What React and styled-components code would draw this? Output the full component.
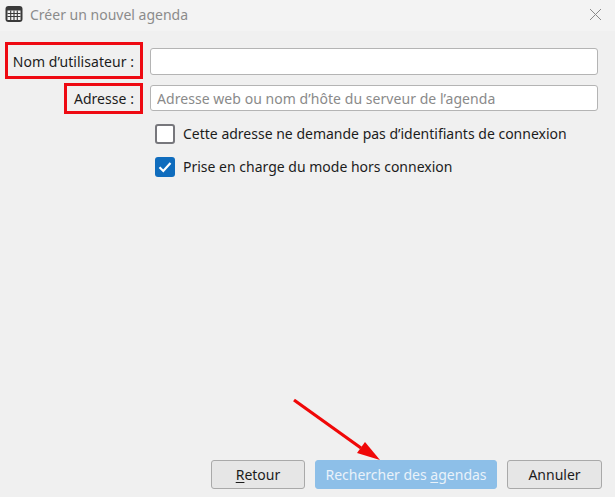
import React from "react";
import styled, { createGlobalStyle } from "styled-components";

const Global = createGlobalStyle`
  html, body { margin: 0; padding: 0; }
  body { background: #f0f0f0; font-family: "Noto Sans", "Open Sans", sans-serif; overflow: hidden; }
`;

const Dialog = styled.div`
  position: relative;
  box-sizing: border-box;
  width: 615px;
  height: 497px;
  display: flex;
  flex-direction: column;
  background: #f0f0f0;
`;

const TitleBar = styled.div`
  height: 31px;
  flex: none;
  display: flex;
  align-items: center;
  padding: 0 13px 3px 5px;
  box-sizing: border-box;
  background: #f3f3f3;
`;

const Title = styled.div`
  margin-left: 7px;
  flex: 1;
  font-size: 14px;
  color: #8b8b8b;
`;

const Form = styled.div`
  display: grid;
  grid-template-columns: 134px 448px;
  column-gap: 16px;
  row-gap: 10px;
  padding: 17px 0 0 0;
  align-items: center;
`;

const Label = styled.label`
  position: relative;
  justify-self: end;
  font-size: 14px;
  letter-spacing: 0.05px;
  color: #1c1c1c;
  white-space: nowrap;
  &::after {
    content: "";
    position: absolute;
    top: ${p => p.$top}px;
    bottom: ${p => p.$bottom}px;
    left: ${p => p.$left}px;
    right: -9px;
    border: 3px solid #ee0a12;
  }
`;

const Field = styled.input`
  box-sizing: border-box;
  width: 448px;
  height: ${p => p.$h}px;
  padding: 0 6px;
  font-family: inherit;
  font-size: 14px;
  letter-spacing: 0.05px;
  background: #fff;
  border: 1px solid #b4b4b4;
  border-radius: 3px;
  outline: none;
  &::placeholder { color: #8a8a8a; opacity: 1; }
`;

const Options = styled.div`
  display: flex;
  flex-direction: column;
  gap: 13px;
  padding: 13px 0 0 155px;
`;

const Option = styled.div`
  display: flex;
  align-items: center;
  gap: 8px;
  font-size: 14px;
  color: #1c1c1c;
  line-height: 20px;
`;

const Box = styled.span`
  box-sizing: border-box;
  width: 20px;
  height: 20px;
  display: flex;
  align-items: center;
  justify-content: center;
  border-radius: 3px;
  background: ${p => (p.$on ? "#0f6cbd" : "#fff")};
  border: ${p => (p.$on ? "none" : "2px solid #77777c")};
`;

const Footer = styled.div`
  margin-top: auto;
  display: flex;
  justify-content: flex-end;
  gap: 10px;
  padding: 0 13px 8px 0;
`;

const Button = styled.button`
  box-sizing: border-box;
  width: ${p => p.$w}px;
  height: 29px;
  padding: 0;
  font-family: inherit;
  font-size: 14px;
  color: ${p => (p.$primary ? "#e9f2fa" : "#1c1c1c")};
  background: ${p => (p.$primary ? "#8dbfe8" : "#e6e6e6")};
  border: 1px solid ${p => (p.$primary ? "#8dbfe8" : "#a9a9a9")};
  border-radius: 3px;
  u { text-underline-offset: 2px; }
`;

const Arrow = styled.svg`
  position: absolute;
  left: 285px;
  top: 390px;
`;

const CalendarIcon = () => (
  <svg width="18" height="18" viewBox="0 0 18 18">
    <rect x="0.5" y="1" width="17" height="16" rx="3" fill="#3a3a3a" />
    <rect x="2.5" y="5.5" width="13" height="9.5" fill="#f3f3f3" />
    <path d="M2.5 8.5h13M2.5 11.5h13M5.7 5.5v9.5M9 5.5v9.5M12.3 5.5v9.5" stroke="#3a3a3a" strokeWidth="1.1" />
  </svg>
);

export default function App() {
  return (
    <Dialog>
      <Global />
      <TitleBar>
        <CalendarIcon />
        <Title>Créer un nouvel agenda</Title>
        <svg width="13" height="13" viewBox="0 0 13 13">
          <path d="M1 1l11 11M12 1L1 12" stroke="#8a8a8a" strokeWidth="1" fill="none" />
        </svg>
      </TitleBar>
      <Form>
        <Label $top={-10} $bottom={-8} $left={-8}>Nom d’utilisateur :</Label>
        <Field $h={27} />
        <Label $top={-6} $bottom={-6} $left={-10}>Adresse :</Label>
        <Field $h={26} placeholder="Adresse web ou nom d’hôte du serveur de l’agenda" />
      </Form>
      <Options>
        <Option>
          <Box />
          Cette adresse ne demande pas d’identifiants de connexion
        </Option>
        <Option>
          <Box $on>
            <svg width="14" height="12" viewBox="0 0 14 12">
              <path d="M1.5 6.2l3.8 3.8 7.2-8" stroke="#fff" strokeWidth="2.2" fill="none" />
            </svg>
          </Box>
          Prise en charge du mode hors connexion
        </Option>
      </Options>
      <Footer>
        <Button $w={94}><u>R</u>etour</Button>
        <Button $w={182} $primary>Rechercher des <u>a</u>gendas</Button>
        <Button $w={95}>Annuler</Button>
      </Footer>
      <Arrow width="100" height="72" viewBox="0 0 100 72">
        <path d="M9 10L76 58" stroke="#f00808" strokeWidth="3.2" fill="none" />
        <path d="M95 70L72 63 80 52 Z" fill="#f00808" />
      </Arrow>
    </Dialog>
  );
}
